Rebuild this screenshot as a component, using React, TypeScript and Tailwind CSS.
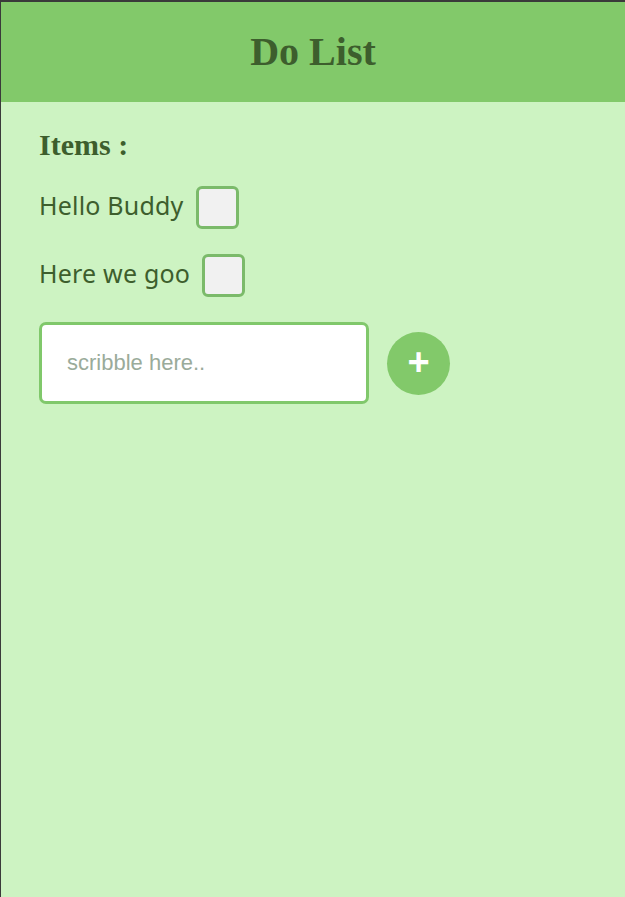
import React from "react";

export default function App() {
  const items = ["Hello Buddy", "Here we goo"];
  return (
    <div className="min-h-[897px] bg-[#cdf3c2] border-t-2 border-l border-[#3a3a3a]">
      <header className="h-[100px] bg-[#82c96a] flex items-center justify-center">
        <h1
          className="text-[40px] font-bold text-[#3d5e2d] leading-none"
          style={{ fontFamily: '"Liberation Serif", "Times New Roman", serif' }}
        >
          Do List
        </h1>
      </header>
      <main className="pl-[38px] pt-[26px] flex flex-col gap-[25px]">
        <h2
          className="text-[30px] font-bold text-[#3d5e2d] leading-[33px]"
          style={{ fontFamily: '"Liberation Serif", "Times New Roman", serif' }}
        >
          Items :
        </h2>
        {items.map((t) => (
          <div key={t} className="flex items-center gap-3 h-[43px]">
            <span
              className="text-[25px] text-[#3d5e2d] leading-none tracking-[0.2px] pb-[4px]"
              style={{ fontFamily: '"Noto Sans", "Open Sans", sans-serif' }}
            >
              {t}
            </span>
            <input
              type="checkbox"
              className="appearance-none w-[43px] h-[43px] rounded-[6px] border-[3px] border-[#7bba6a] bg-[#f1f1f1]"
            />
          </div>
        ))}
        <div className="flex items-center gap-[18px]">
          <input
            type="text"
            placeholder="scribble here.."
            className="box-border w-[330px] h-[82px] rounded-[7px] border-[3px] border-[#80c86b] bg-white pl-[25px] text-[22px] outline-none placeholder:text-[#9aab9a]"
            style={{ fontFamily: '"Liberation Sans", Arial, sans-serif' }}
          />
          <button
            className="w-[63px] h-[63px] rounded-full bg-[#82c96a] text-white text-[38px] font-bold flex items-center justify-center leading-none pb-[3px]"
            style={{ fontFamily: '"Liberation Sans", Arial, sans-serif' }}
          >
            +
          </button>
        </div>
      </main>
    </div>
  );
}
